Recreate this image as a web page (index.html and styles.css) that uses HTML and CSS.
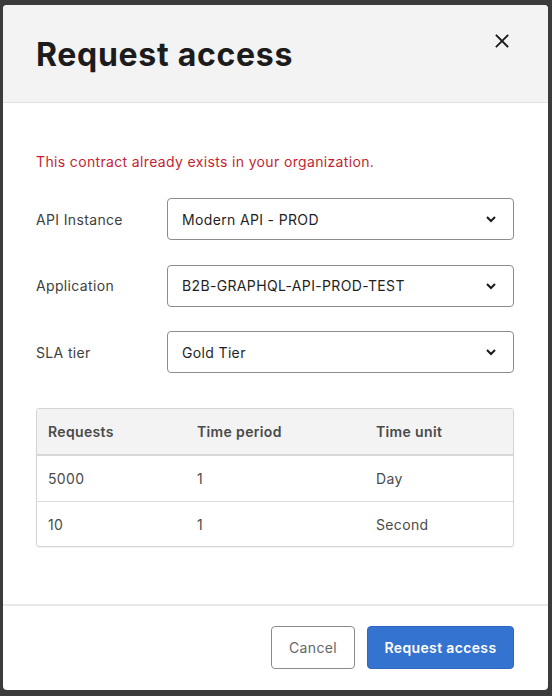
FILE: index.html
```html
<!DOCTYPE html>
<html>
<head>
<meta charset="utf-8">
<link rel="stylesheet" href="styles.css">
</head>
<body>
<div class="modal">
  <div class="modal-header">
    <h1 class="title">Request access</h1>
    <button class="close" aria-label="Close">
      <svg width="16" height="16" viewBox="0 0 16 16"><path d="M2.5 2.5 L13.5 13.5 M13.5 2.5 L2.5 13.5" stroke="#1a1a1a" stroke-width="1.8" fill="none" stroke-linecap="square"/></svg>
    </button>
  </div>
  <div class="modal-body">
    <p class="error">This contract already exists in your organization.</p>
    <div class="field">
      <label class="label">API Instance</label>
      <div class="select"><span>Modern API - PROD</span><svg class="chev" width="12" height="8" viewBox="0 0 12 8"><path d="M2 2 L6 6 L10 2" stroke="#1a1a1a" stroke-width="2" fill="none"/></svg></div>
    </div>
    <div class="field">
      <label class="label">Application</label>
      <div class="select"><span>B2B-GRAPHQL-API-PROD-TEST</span><svg class="chev" width="12" height="8" viewBox="0 0 12 8"><path d="M2 2 L6 6 L10 2" stroke="#1a1a1a" stroke-width="2" fill="none"/></svg></div>
    </div>
    <div class="field">
      <label class="label">SLA tier</label>
      <div class="select"><span>Gold Tier</span><svg class="chev" width="12" height="8" viewBox="0 0 12 8"><path d="M2 2 L6 6 L10 2" stroke="#1a1a1a" stroke-width="2" fill="none"/></svg></div>
    </div>
    <div class="table">
      <div class="row head">
        <div class="cell">Requests</div><div class="cell">Time period</div><div class="cell">Time unit</div>
      </div>
      <div class="row">
        <div class="cell">5000</div><div class="cell">1</div><div class="cell">Day</div>
      </div>
      <div class="row last">
        <div class="cell">10</div><div class="cell">1</div><div class="cell">Second</div>
      </div>
    </div>
  </div>
  <div class="modal-footer">
    <button class="btn btn-secondary">Cancel</button>
    <button class="btn btn-primary">Request access</button>
  </div>
</div>
</body>
</html>
```

FILE: styles.css
```css
html, body {
  margin: 0;
  padding: 0;
  background: #3b3b3b;
  font-family: Inter, "Liberation Sans", Arial, sans-serif;
}
body {
  padding: 5px 4px 6px 3px;
}
.modal {
  width: 545px;
  height: 685px;
  background: #ffffff;
  border-radius: 4px;
  overflow: hidden;
  display: flex;
  flex-direction: column;
}
.modal-header {
  height: 97px;
  background: #f3f3f3;
  border-bottom: 1px solid #e3e3e3;
  display: flex;
  justify-content: space-between;
  align-items: flex-start;
  padding: 0 38px 0 33px;
  box-sizing: content-box;
}
.title {
  margin: 0;
  margin-top: 31px;
  font-size: 32px;
  line-height: 38px;
  font-weight: 700;
  color: #1c1c1c;
  letter-spacing: 0.7px;
}
.close {
  margin-top: 28px;
  width: 16px;
  height: 16px;
  padding: 0;
  border: 0;
  background: transparent;
  display: flex;
}
.modal-body {
  flex: 1;
  padding: 49px 33px 0 33px;
  letter-spacing: 0.35px;
}
.error {
  margin: 0 0 26px 0;
  font-size: 14px;
  line-height: 20px;
  color: #c41f32;
}
.field {
  display: flex;
  align-items: center;
  margin-bottom: 24.5px;
}
.label {
  width: 131px;
  font-size: 14px;
  color: #404040;
}
.select {
  width: 347px;
  height: 42px;
  box-sizing: border-box;
  border: 1px solid #8c8c8c;
  border-radius: 4px;
  display: flex;
  align-items: center;
  justify-content: space-between;
  padding: 0 16px 0 14px;
  font-size: 14px;
  color: #1f1f1f;
}
.chev {
  display: block;
}
.table {
  margin-top: 35px;
  width: 478px;
  border: 1px solid #d4d4d4;
  border-radius: 3px;
  box-sizing: border-box;
  overflow: hidden;
  box-shadow: 0 1px 1px rgba(0,0,0,0.05);
}
.row {
  display: grid;
  grid-template-columns: 149px 179px 1fr;
  height: 45px;
  align-items: center;
  border-bottom: 1px solid #dcdcdc;
  font-size: 14px;
  color: #4a4a4a;
}
.row.last {
  border-bottom: 0;
  height: 44px;
}
.row.head {
  background: #f3f3f3;
  height: 45px;
  border-bottom: 2px solid #d8d8d8;
  font-weight: 600;
  color: #4a4a4a;
}
.cell {
  padding-left: 11px;
}
.modal-footer {
  border-top: 2px solid #e8e8e8;
  height: 86px;
  box-sizing: border-box;
  display: flex;
  justify-content: flex-end;
  align-items: flex-start;
  padding: 20px 34px 0 0;
  gap: 12px;
}
.btn {
  height: 43px;
  border-radius: 4px;
  font-family: inherit;
  font-size: 14px;
  letter-spacing: 0.35px;
  padding: 0;
}
.btn-secondary {
  width: 84px;
  background: #fff;
  border: 1px solid #8a8a8a;
  color: #666;
}
.btn-primary {
  width: 147px;
  background: #3573d0;
  border: 1px solid #2f68c0;
  color: #fff;
  font-weight: 600;
}
```
